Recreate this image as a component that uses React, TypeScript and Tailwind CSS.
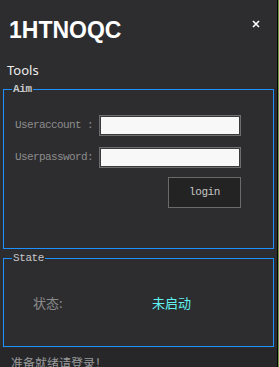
import React from "react";

const MONO = "font-['Liberation_Mono','DejaVu_Sans_Mono',monospace]";

function GroupBox({ title, bold, className, children }: { title: string; bold?: boolean; className?: string; children: React.ReactNode }) {
  return (
    <div className={`relative mx-[3px] shrink-0 border border-solid border-[#1e90ff] ${className ?? ""}`}>
      <span
        className={`absolute left-[8px] top-[-8px] bg-[#2d2d30] px-[1px] text-[11px] leading-[14px] tracking-[-0.4px] text-[#c8c8c8] ${bold ? "font-bold" : ""} ${MONO}`}
      >
        {title}
      </span>
      {children}
    </div>
  );
}

export default function App() {
  return (
    <div className="flex h-[367px] w-[279px] overflow-hidden">
      <div className="flex w-[277px] flex-col bg-[#2d2d30]">
        <div className="flex shrink-0 items-start justify-between pl-[9px] pr-[17px] pt-[16px]">
          <h1 className="font-['Liberation_Sans',Arial,sans-serif] text-[23px] font-bold leading-[28px] text-white">1HTNOQC</h1>
          <svg width="8" height="8" viewBox="0 0 8 8" className="mt-[4px]">
            <path d="M1 1L7 7M7 1L1 7" stroke="white" strokeWidth="1.6" />
          </svg>
        </div>

        <div className="mt-[18px] shrink-0 pl-[7px] font-['Noto_Sans',sans-serif] text-[13px] leading-[16px] text-[#ececec]">Tools</div>

        <GroupBox title="Aim" bold className="mt-[11px] h-[160px]">
          <div className={`w-fit pl-[11px] pt-[25px] text-[11px] tracking-[-0.6px] text-[#8c8c8c] ${MONO}`}>
            <div className="flex items-center">
              <span className="w-[84px] whitespace-pre">Useraccount :</span>
              <div className="h-[21px] w-[142px] border border-[#6e6e6e] bg-[#f8f8f8] shadow-[inset_0_0_0_1px_#3a3a3a]" />
            </div>
            <div className="mt-[11px] flex items-center">
              <span className="w-[84px] whitespace-pre">Userpassword:</span>
              <div className="h-[21px] w-[142px] border border-[#6e6e6e] bg-[#f8f8f8] shadow-[inset_0_0_0_1px_#3a3a3a]" />
            </div>
            <div className="mt-[9px] flex justify-end">
              <button className="h-[31px] w-[73px] border border-[#6a6a6a] bg-[#232323] text-[11px] tracking-[-0.4px] text-[#c4c4c4]">
                login
              </button>
            </div>
          </div>
        </GroupBox>

        <GroupBox title="State" className="mt-[9px] flex h-[89px] items-center">
          <div className="flex items-center font-['Noto_Sans_CJK_SC',sans-serif] text-[13px] leading-[18px]">
            <span className="w-[148px] pl-[29px] text-[#8a8a8a]">状态:</span>
            <span className="text-[#5ff3f3]">未启动</span>
          </div>
        </GroupBox>

        <div className="mt-[1px] min-h-0 flex-1 overflow-hidden bg-[#27272a] pl-[11px] pt-[7px] font-['Noto_Sans_CJK_SC',sans-serif] text-[12px] leading-[16px] text-[#9a9a9a]">
          准备就绪请登录！
        </div>
      </div>
      <div className="w-px bg-black" />
      <div className="w-px bg-[#6f9a45]" />
    </div>
  );
}
